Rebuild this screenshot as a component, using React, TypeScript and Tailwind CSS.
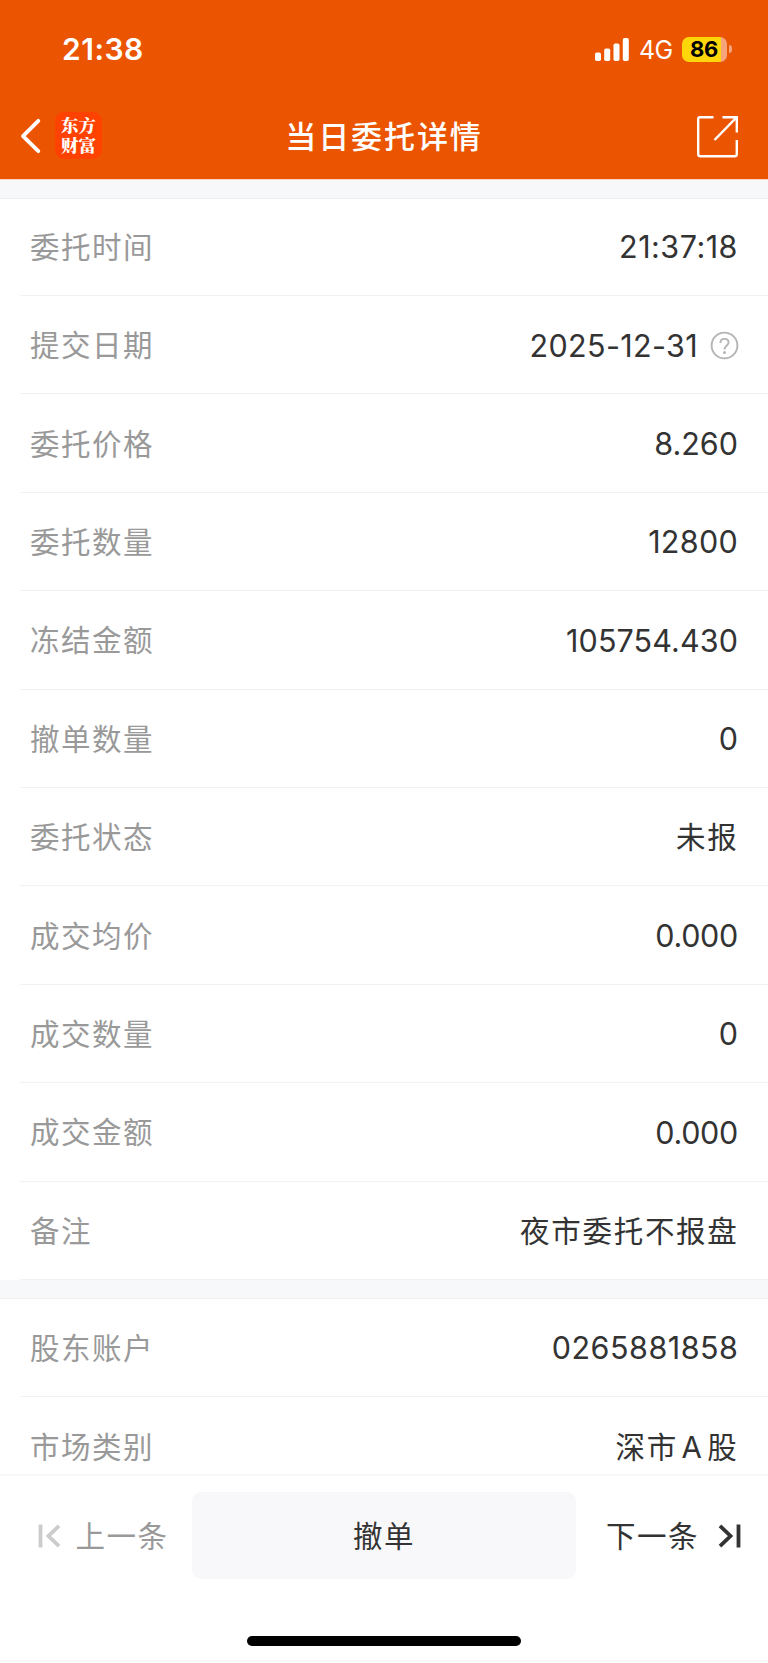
import { clsx } from "clsx"

type Row = { label: string; value: string; spacing?: string; help?: boolean }

const orderRows: Row[] = [
  { label: "委托时间", value: "21:37:18", spacing: "tracking-[0.5px]" },
  { label: "提交日期", value: "2025-12-31", spacing: "tracking-[0.35px]", help: true },
  { label: "委托价格", value: "8.260" },
  { label: "委托数量", value: "12800", spacing: "tracking-[0.3px]" },
  { label: "冻结金额", value: "105754.430", spacing: "tracking-[0.1px]" },
  { label: "撤单数量", value: "0" },
  { label: "委托状态", value: "未报" },
  { label: "成交均价", value: "0.000", spacing: "tracking-[-0.3px]" },
  { label: "成交数量", value: "0" },
  { label: "成交金额", value: "0.000", spacing: "tracking-[-0.3px]" },
  { label: "备注", value: "夜市委托不报盘" },
]

const accountRows: Row[] = [
  { label: "股东账户", value: "0265881858", spacing: "tracking-[0.5px] -mr-[0.5px]" },
  { label: "市场类别", value: "深市A股" },
]

function StatusBar() {
  return (
    <div className="flex h-[98px] items-center justify-between pr-[36px] pl-[62px]">
      <span className="text-[30px] leading-none font-semibold tracking-[0.5px]">21:38</span>
      <div className="flex items-center">
        <svg width="34" height="23" viewBox="0 0 34 23" fill="currentColor">
          <rect x="0" y="14.5" width="6" height="8.5" rx="1.8" />
          <rect x="9.2" y="10.5" width="6" height="12.5" rx="1.8" />
          <rect x="18.5" y="5.5" width="6" height="17.5" rx="1.8" />
          <rect x="27.8" y="0" width="6" height="23" rx="1.8" />
        </svg>
        <span className="ml-[10px] w-[34px] pt-[2px] text-[25px] leading-none tracking-[-0.6px]">4G</span>
        <div className="ml-[9px] flex h-[25px] w-[45px] items-center justify-center overflow-hidden rounded-[7px] bg-[linear-gradient(to_right,#ffd60a_86%,#f5a47c_86%)]">
          <span className="pr-[1px] text-[22px] leading-none font-bold tracking-[-0.3px] text-black">86</span>
        </div>
        <span className="ml-[2px] h-[8px] w-[3px] rounded-r-full bg-[#f5a47c]" />
      </div>
    </div>
  )
}

function NavBar() {
  return (
    <div className="flex h-[81px] items-start justify-between pr-[29px] pl-[20px]">
      <div className="flex w-[189px] items-center pt-[14px]">
        <svg width="21" height="36" viewBox="0 0 21 36" fill="none" stroke="currentColor" strokeWidth="3.8" strokeLinecap="round" strokeLinejoin="round">
          <path d="M18.3 2.8 3 18.2 18.3 33.2" />
        </svg>
        <div className="ml-[14px] flex size-[47px] items-center justify-center rounded-[9px] bg-[#ff4200] pb-[2px] pl-[1px]">
          <span className="w-[36px] font-['Noto_Serif_CJK_SC','Noto_Sans_CJK_SC',serif] text-[17.5px] leading-[19.5px] font-black break-all">
            东方财富
          </span>
        </div>
      </div>
      <h1 className="pt-[15px] text-[31px] leading-[48px] font-medium tracking-[1.9px]">当日委托详情</h1>
      <div className="flex w-[180px] justify-end pt-[17px]">
        <svg width="43" height="44" viewBox="0 0 43 44" fill="none" stroke="currentColor" strokeWidth="2.4">
          <path d="M17.5 2.2H4Q2.2 2.2 2.2 4V39Q2.2 41.3 4.5 41.3H38.5Q40.8 41.3 40.8 39V25" />
          <path d="M26.5 2.2H40.8V17.5M40.8 2.2 18.5 25" />
        </svg>
      </div>
    </div>
  )
}

function HelpIcon() {
  return (
    <svg className="-mr-[1px] ml-[12px]" width="29" height="29" viewBox="0 0 29 29" fill="none" stroke="#b4b4b4" strokeWidth="1.9">
      <circle cx="14.5" cy="14.5" r="12.9" />
      <path d="M10.4 12C10.4 9.4 12 7.9 14.5 7.9S18.6 9.5 18.6 11.6C18.6 14.3 14.5 14.8 14.5 18.4" />
      <circle cx="14.5" cy="21.4" r="1.5" fill="#b4b4b4" stroke="none" />
    </svg>
  )
}

function DetailRow({ row }: { row: Row }) {
  const isNumeric = /^[\d:.-]+$/.test(row.value)

  return (
    <div className="ml-[20px] flex h-[98.4px] items-center justify-between border-b border-[#f2f2f2] pt-[1.4px] pr-[30px] pl-[10px] text-[29.5px]">
      <span className="tracking-[1.5px] text-[#999999]">{row.label}</span>
      <span className="flex items-center text-[#333333]">
        <span
          className={clsx(
            isNumeric ? "text-[30.5px]" : "-mr-[0.5px] tracking-[1.7px] [text-autospace:normal]",
            row.spacing,
          )}
        >
          {row.value}
        </span>
        {row.help && <HelpIcon />}
      </span>
    </div>
  )
}

function BottomBar() {
  return (
    <footer className="flex h-[189px] shrink-0 flex-col border-t-2 border-[#f8f8f8] bg-white text-[29.5px] tracking-[1.5px] text-[#333333]">
      <div className="flex items-center pt-[16px]">
        <button className="flex w-[192px] items-center pl-[38px] text-[#999999]">
          <svg width="23" height="24" viewBox="0 0 23 24" fill="none" stroke="#cccccc" strokeWidth="3.8">
            <path d="M2.5 0.5V23.5M21 1.8 10.5 12 21 22.2" />
          </svg>
          <span className="ml-[14.5px] pt-[2px]">上一条</span>
        </button>
        <button className="h-[87px] w-[384px] rounded-[9px] bg-[#f8f8fa] pt-[2px]">撤单</button>
        <button className="flex w-[192px] items-center pl-[30px]">
          <span className="pt-[2px]">下一条</span>
          <svg className="ml-[19px]" width="23" height="24" viewBox="0 0 23 24" fill="none" stroke="#333333" strokeWidth="3.8">
            <path d="M2 1.8 12.5 12 2 22.2M20.5 0.5V23.5" />
          </svg>
        </button>
      </div>
      <div className="mx-auto mt-[57px] h-[10px] w-[274px] rounded-full bg-black" />
      <div className="mt-[14px] h-[2px] bg-[#f8f8f8]" />
    </footer>
  )
}

export default function App() {
  return (
    <div className="flex h-[1663px] w-[768px] flex-col overflow-hidden bg-white font-['Inter','Noto_Sans_CJK_SC',sans-serif]">
      <header className="shrink-0 bg-[#eb5502] text-white">
        <StatusBar />
        <NavBar />
      </header>
      <main className="min-h-0 flex-1 overflow-hidden">
        <div className="-mb-[1.4px] h-[20px] border-t border-b border-t-[#f8d5c2] border-b-[#eeeeee] bg-[#f7f8fa]" />
        {orderRows.map((row) => (
          <DetailRow key={row.label} row={row} />
        ))}
        <div className="h-[19px] border-b border-[#eeeeee] bg-[#f7f8fa]" />
        {accountRows.map((row) => (
          <DetailRow key={row.label} row={row} />
        ))}
      </main>
      <BottomBar />
    </div>
  )
}
